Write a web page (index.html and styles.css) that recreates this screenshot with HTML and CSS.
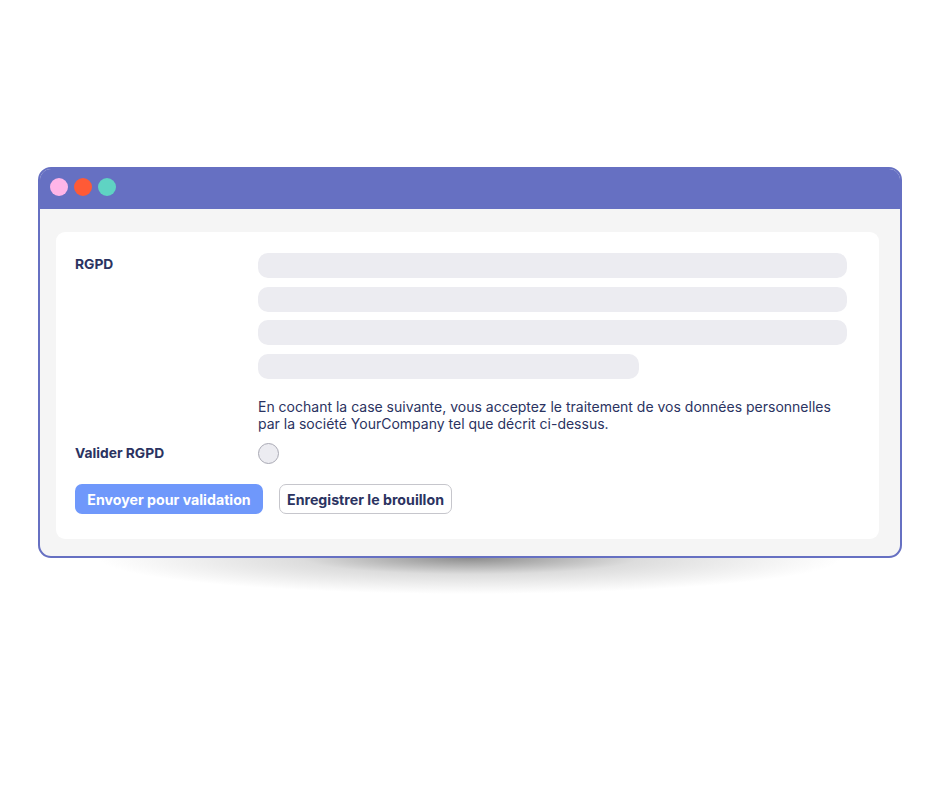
FILE: index.html
```html
<!DOCTYPE html>
<html lang="fr">
<head>
<meta charset="utf-8">
<title>RGPD</title>
<link rel="stylesheet" href="styles.css">
</head>
<body>
<div class="stage">
  <div class="window">
    <div class="titlebar">
      <span class="dot dot-pink"></span>
      <span class="dot dot-orange"></span>
      <span class="dot dot-teal"></span>
    </div>
    <div class="content">
      <div class="card">
        <div class="row">
          <div class="label">RGPD</div>
          <div class="field">
            <div class="bars">
              <div class="bar"></div>
              <div class="bar"></div>
              <div class="bar"></div>
              <div class="bar bar-short"></div>
            </div>
            <p class="notice">En cochant la case suivante, vous acceptez le traitement de vos données personnelles par la société YourCompany tel que décrit ci-dessus.</p>
          </div>
        </div>
        <div class="row row-check">
          <div class="label">Valider RGPD</div>
          <div class="field"><span class="radio"></span></div>
        </div>
        <div class="actions">
          <button class="btn btn-primary">Envoyer pour validation</button>
          <button class="btn btn-secondary">Enregistrer le brouillon</button>
        </div>
      </div>
    </div>
  </div>
  <div class="drop-shadow"></div>
</div>
</body>
</html>
```
FILE: styles.css
```css
* { box-sizing: border-box; }
html, body { margin: 0; padding: 0; background: #ffffff; }
body { font-family: "Inter", "Noto Sans", sans-serif; color: #2b3361; }
.stage { padding: 167px 38px 0 38px; }
.window {
  width: 864px;
  height: 391px;
  border: 2px solid #6670c2;
  border-radius: 13px;
  background: #f5f5f5;
  display: flex;
  flex-direction: column;
}
.drop-shadow {
  margin: 0 60px;
  height: 36px;
  background: radial-gradient(ellipse 50% 100% at 50% 0%, rgba(70,70,70,0.62) 0%, rgba(110,110,110,0.24) 45%, rgba(255,255,255,0) 100%);
}
.titlebar {
  height: 40px;
  background: #6670c2;
  border-radius: 11px 11px 0 0;
  display: flex;
  align-items: center;
  gap: 6px;
  padding: 0 0 4px 10px;
}
.dot { width: 18px; height: 18px; border-radius: 50%; display: block; }
.dot-pink { background: #ffb5e8; }
.dot-orange { background: #ff5a36; }
.dot-teal { background: #5fd3c3; }
.content { flex: 1; padding: 23px 21px 17px 16px; display: flex; }
.card {
  flex: 1;
  background: #ffffff;
  border-radius: 9px;
  padding: 21px 32px 0 19px;
}
.row { display: flex; }
.label {
  width: 183px;
  flex: none;
  font-weight: 700;
  font-size: 13.8px;
  line-height: 22px;
  color: #2b3361;
}
.field { flex: 1; }
.bars { display: flex; flex-direction: column; gap: 8.7px; }
.bar { height: 25px; border-radius: 10px; background: #ececf1; }
.bar-short { width: 381px; }
.notice {
  margin: 19px 0 0 0;
  font-size: 14px;
  line-height: 17px;
  color: #2b3361;
}
.row-check { margin-top: 10px; align-items: center; }
.radio {
  display: block;
  width: 21px;
  height: 21px;
  border-radius: 50%;
  border: 1px solid #a9a9b4;
  background: #ececf1;
}
.actions { display: flex; gap: 16px; margin-top: 20px; }
.btn {
  height: 30px;
  border-radius: 7px;
  font-family: inherit;
  font-weight: 700;
  font-size: 14.2px;
  padding: 0 6px;
  cursor: pointer;
}
.btn-primary { width: 188px; background: #6f98fb; color: #ffffff; border: none; }
.btn-secondary { width: 173px; background: #ffffff; color: #2b3361; border: 1px solid #c6c6cc; }
```
